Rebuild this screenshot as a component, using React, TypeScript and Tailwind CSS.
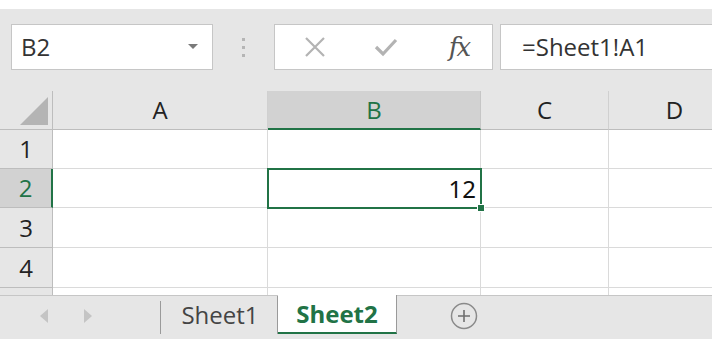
import React from "react";

const font = { fontFamily: '"Open Sans", "Noto Sans", sans-serif' };

const cols = [
  { name: "A", w: "w-[215px]" },
  { name: "B", w: "w-[213px]" },
  { name: "C", w: "w-[128px]" },
  { name: "D", w: "w-[132px]" },
];

const rows = [
  { n: 1, h: "h-[39px]" },
  { n: 2, h: "h-[39px]" },
  { n: 3, h: "h-[40px]" },
  { n: 4, h: "h-[40px]" },
];

const FormulaBar = () => (
  <div className="flex h-[82px] items-start bg-[#e6e6e6] pl-[11px] pt-[15px]">
    {/* name box */}
    <div className="flex h-[46px] w-[202px] shrink-0 items-center border border-[#c6c6c6] bg-white pl-[9px] pr-[14px]">
      <span className="flex-1 text-[24px] text-[#333]">B2</span>
      <svg width="10" height="6" viewBox="0 0 10 6">
        <path d="M0 0 L10 0 L5 5 Z" fill="#7a7a7a" />
      </svg>
    </div>
    <div className="flex h-[46px] w-[61px] shrink-0 flex-col items-center justify-center gap-[5px]">
      <span className="h-[3px] w-[3px] bg-[#b5b5b5]" />
      <span className="h-[3px] w-[3px] bg-[#b5b5b5]" />
      <span className="h-[3px] w-[3px] bg-[#b5b5b5]" />
    </div>
    {/* cancel / enter / fx */}
    <div className="flex h-[46px] w-[219px] shrink-0 items-center border border-[#c6c6c6] bg-white">
      <div className="flex w-[76px] justify-center pl-[3px]">
        <svg width="22" height="22" viewBox="0 0 22 22">
          <path d="M2 2 L20 20 M20 2 L2 20" stroke="#b3b3b3" strokeWidth="2.2" />
        </svg>
      </div>
      <div className="flex w-[70px] justify-center">
        <svg width="24" height="20" viewBox="0 0 24 20">
          <path d="M2 10 L9 17 L22 3" stroke="#b3b3b3" strokeWidth="3.2" fill="none" />
        </svg>
      </div>
      <div className="flex w-[70px] justify-center pl-[6px]">
        <span
          className="text-[26px] italic leading-none tracking-[-2px] text-[#555]"
          style={{ fontFamily: '"DejaVu Serif", "Liberation Serif", serif' }}
        >
          fx
        </span>
      </div>
    </div>
    <div className="ml-[7px] flex h-[46px] flex-1 items-center border border-r-0 border-[#c6c6c6] bg-white pl-[21px]">
      <span className="text-[24px] text-[#333]">=Sheet1!A1</span>
    </div>
  </div>
);

const Grid = () => (
  <div className="relative">
    {/* column headers */}
    <div className="flex h-[39px] bg-[#e6e6e6]">
      <div className="flex w-[53px] shrink-0 items-end justify-end border-r border-b border-[#bdbdbd] pr-[4px] pb-[4px]">
        <svg width="28" height="28" viewBox="0 0 28 28">
          <path d="M28 0 L28 28 L0 28 Z" fill="#b4b4b4" />
        </svg>
      </div>
      {cols.map((c) =>
        c.name === "B" ? (
          <div
            key={c.name}
            className={`${c.w} flex shrink-0 items-center justify-center border-r border-b-2 border-r-[#c6c6c6] border-b-[#217346] bg-[#d2d2d2] text-[24px] text-[#217346]`}
          >
            {c.name}
          </div>
        ) : (
          <div
            key={c.name}
            className={`${c.w} flex shrink-0 items-center justify-center border-r border-b border-r-[#d0d0d0] border-b-[#bdbdbd] text-[24px] text-[#222]`}
          >
            {c.name}
          </div>
        )
      )}
    </div>
    {rows.map((r) => (
      <div key={r.n} className={`flex ${r.h}`}>
        {r.n === 2 ? (
          <div className="flex w-[53px] shrink-0 items-center justify-center border-r-2 border-b border-r-[#217346] border-b-[#bdbdbd] bg-[#d2d2d2] text-[24px] text-[#217346]">
            {r.n}
          </div>
        ) : (
          <div className="flex w-[53px] shrink-0 items-center justify-center border-r border-b border-[#bdbdbd] bg-[#e6e6e6] text-[24px] text-[#222]">
            {r.n}
          </div>
        )}
        {cols.map((c) => (
          <div key={c.name} className={`${c.w} shrink-0 border-r border-b border-[#dadada] bg-white`} />
        ))}
      </div>
    ))}
    <div className="flex h-[7px]">
      <div className="w-[53px] shrink-0 border-r border-[#bdbdbd] bg-[#e6e6e6]" />
      {cols.map((c) => (
        <div key={c.name} className={`${c.w} shrink-0 border-r border-[#dadada] bg-white`} />
      ))}
    </div>
    {/* active cell B2 */}
    <div className="absolute left-[267px] top-[77px] flex h-[41px] w-[215px] items-center justify-end border-2 border-[#217346] pr-[4px]">
      <span
        className="text-[24px] text-[#111]"
        style={{ fontFamily: '"Noto Sans", "Open Sans", sans-serif' }}
      >
        12
      </span>
      <span className="absolute -bottom-[5px] -right-[5px] h-[8px] w-[8px] border border-white bg-[#217346]" />
    </div>
  </div>
);

const Tabs = () => (
  <div className="flex h-[45px] items-start border-t border-[#c6c6c6] bg-[#e6e6e6]">
    <div className="flex h-[40px] w-[160px] shrink-0 items-center pl-[40px]">
      <svg width="8" height="14" viewBox="0 0 8 14">
        <path d="M8 0 L8 14 L0 7 Z" fill="#c4c4c4" />
      </svg>
      <svg className="ml-[36px]" width="8" height="14" viewBox="0 0 8 14">
        <path d="M0 0 L0 14 L8 7 Z" fill="#c4c4c4" />
      </svg>
    </div>
    <div className="mt-[5px] h-[33px] w-px shrink-0 bg-[#9a9a9a]" />
    <div className="flex h-[38px] w-[117px] shrink-0 items-center justify-center border-r border-[#9a9a9a] pl-[2px]">
      <span className="text-[24px] text-[#444]">Sheet1</span>
    </div>
    <div className="-mt-px flex h-[39px] w-[119px] shrink-0 items-center justify-center border-r border-b-2 border-r-[#9a9a9a] border-b-[#217346] bg-white">
      <span className="text-[24px] font-bold text-[#217346]">Sheet2</span>
    </div>
    <div className="flex h-[40px] w-[134px] shrink-0 items-center justify-center">
      <svg width="28" height="28" viewBox="0 0 28 28">
        <circle cx="14" cy="14" r="12.5" stroke="#8a8a8a" strokeWidth="1.5" fill="none" />
        <path d="M14 8 L14 20 M8 14 L20 14" stroke="#6f6f6f" strokeWidth="1.6" />
      </svg>
    </div>
  </div>
);

export default function App() {
  return (
    <div className="h-[339px] w-[712px] overflow-hidden bg-white" style={font}>
      <div className="h-[9px] bg-white" />
      <FormulaBar />
      <Grid />
      <Tabs />
    </div>
  );
}
